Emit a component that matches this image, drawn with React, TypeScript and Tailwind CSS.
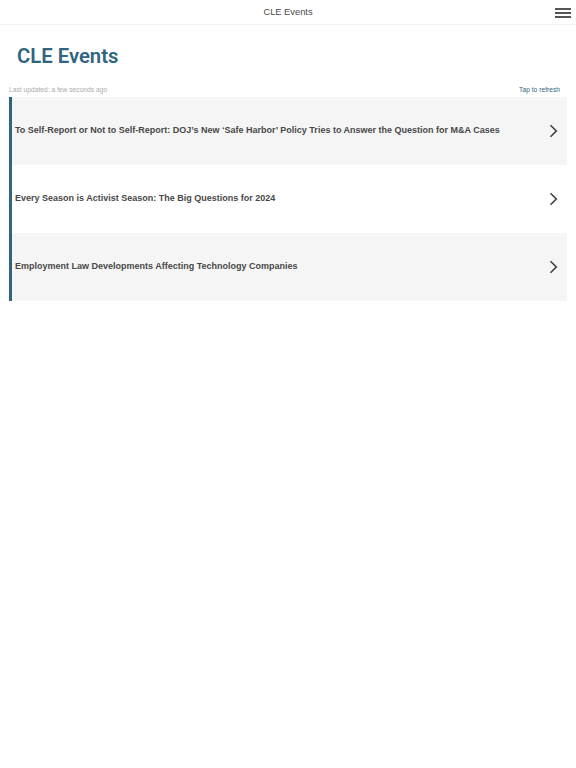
const events = [
  "To Self-Report or Not to Self-Report: DOJ\u2019s New \u2018Safe Harbor\u2019 Policy Tries to Answer the Question for M&A Cases",
  'Every Season is Activist Season: The Big Questions for 2024',
  'Employment Law Developments Affecting Technology Companies',
]

function Chevron() {
  return (
    <svg width="9" height="14" viewBox="0 0 9 14" fill="none" className="shrink-0">
      <path d="M1.5 1.2 L7.3 7 L1.5 12.8" stroke="#3f3f3f" strokeWidth="1.6" />
    </svg>
  )
}

export default function App() {
  return (
    <div className="min-h-[768px] bg-white font-['Liberation_Sans',Arial,sans-serif]">
      <header className="relative flex h-[25px] items-center justify-center border-b border-[#f1f1f1]">
        <span className="pt-[1px] text-[9.3px] text-[#4a4a4a]">CLE Events</span>
        <button type="button" className="absolute right-[5px] top-[8px] flex w-[16px] flex-col gap-[2px]">
          <span className="h-[2px] w-full bg-[#555555]" />
          <span className="h-[2px] w-full bg-[#555555]" />
          <span className="h-[2px] w-full bg-[#555555]" />
        </button>
      </header>

      <h1 className="pl-[17px] pt-[16px] font-['Roboto',sans-serif] text-[20.3px] font-semibold leading-[30px] text-[#306580]">
        CLE Events
      </h1>

      <div className="mt-[14px] flex items-center justify-between pl-[9px] pr-[16px] text-[6.7px] leading-[10px]">
        <span className="text-[#ababab]">Last updated: a few seconds ago</span>
        <span className="text-[#306580]">Tap to refresh</span>
      </div>

      <ul className="mx-[9px] mt-[2px] border-l-[3px] border-[#306580]">
        {events.map((title, i) => (
          <li
            key={title}
            className={`flex h-[68px] items-center justify-between pl-[3px] pr-[9px] ${
              i % 2 === 0 ? 'bg-[#f5f5f5]' : 'bg-white'
            }`}
          >
            <span className="text-[9px] font-bold text-[#484848]">{title}</span>
            <Chevron />
          </li>
        ))}
      </ul>
    </div>
  )
}
